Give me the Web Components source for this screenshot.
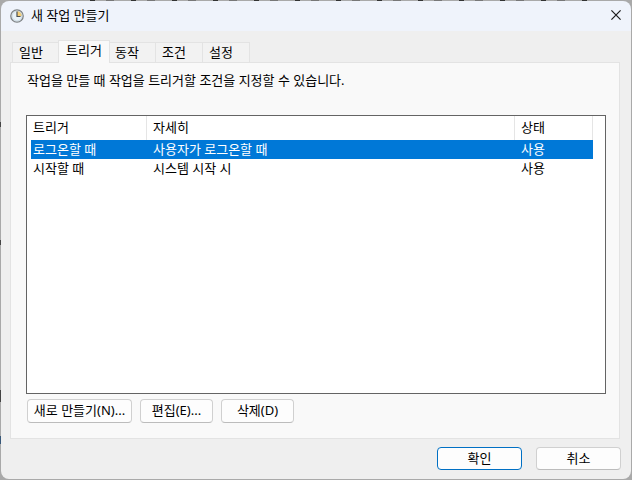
<!DOCTYPE html>
<html lang="ko">
<head>
<meta charset="utf-8">
<title>새 작업 만들기</title>
<style>
  html, body {
    height: 100%;
  }

  body {
    margin: 0;
    font: 13px/18px "Noto Sans", "Noto Sans CJK KR", sans-serif;
    color: #000;
    background: #aaa;
  }
</style>
</head>
<body>
<task-dialog heading="새 작업 만들기">
  <tab-strip slot="tabs">
    <tab-item>일반</tab-item>
    <tab-item selected>트리거</tab-item>
    <tab-item>동작</tab-item>
    <tab-item>조건</tab-item>
    <tab-item>설정</tab-item>
  </tab-strip>
  <tab-panel>
    <span slot="hint">작업을 만들 때 작업을 트리거할 조건을 지정할 수 있습니다.</span>
    <trigger-list></trigger-list>
    <push-button slot="actions" style="--width: 105px">새로 만들기(N)...</push-button>
    <push-button slot="actions">편집(E)...</push-button>
    <push-button slot="actions">삭제(D)</push-button>
  </tab-panel>
  <push-button slot="footer" primary style="--width: 85px; --height: 23px">확인</push-button>
  <push-button slot="footer" style="--width: 85px; --height: 23px">취소</push-button>
</task-dialog>

<template id="task-dialog">
  <header>
    <svg class="clock" width="14" height="14" viewBox="0 0 14 14">
      <circle cx="7" cy="7" r="6.2" fill="#e9f2f8" stroke="#7d8183" stroke-width="1.3"/>
      <path d="M7 7V2a5 5 0 0 1 5 5z" fill="#f5ce75"/>
      <circle cx="7" cy="7" r="4.9" fill="none" stroke="#b9c9d3" stroke-width=".6"/>
      <path d="M7 2.6V7.5H10.6" fill="none" stroke="#4b5054" stroke-width="1.2"/>
    </svg>
    <h1></h1>
    <button aria-label="닫기">
      <svg width="10" height="10" viewBox="0 0 10 10">
        <path d="M.4 .4L9.6 9.6M9.6 .4L.4 9.6" stroke="#1a1a1a" stroke-width="1.2"/>
      </svg>
    </button>
  </header>
  <main>
    <slot name="tabs"></slot>
    <slot></slot>
  </main>
  <footer><slot name="footer"></slot></footer>
  <style>
    :host {
      display: flex;
      box-sizing: border-box;
      height: 100vh;
      padding: 1px;
      background:
        repeating-linear-gradient(90deg, #333 0 5px, transparent 5px 16px, #777 16px 24px, transparent 24px 41px) 90px 0 / 500px 1px no-repeat,
        linear-gradient(#444, #444) 0 122px / 1px 5px no-repeat,
        linear-gradient(#444, #444) 0 240px / 1px 5px no-repeat,
        linear-gradient(#444, #444) 0 390px / 1px 12px no-repeat,
        linear-gradient(#375778, #375778) 0 436px / 1px 8px no-repeat,
        #a9a9a9;
      flex-direction: column;
    }

    header {
      display: flex;
      align-items: center;
      height: 30px;
      padding: 0 10px 0 9px;
      background: #eff3fb;
      border-radius: 8px 8px 0 0;
      box-sizing: border-box;
    }

    h1 {
      flex: 1;
      margin: 0 0 0 7px;
      padding-bottom: 2px;
      font: inherit;
    }

    header button {
      display: grid;
      padding: 0 0 2px;
      border: 0;
      background: transparent;
    }

    main {
      display: flex;
      flex: 1;
      flex-direction: column;
      padding: 9px 11px 0 9px;
      background: #efefef;
    }

    footer {
      display: flex;
      justify-content: flex-end;
      gap: 14px;
      padding: 8px 10px 9px;
      background: #efefef;
      border-radius: 0 0 8px 8px;
    }
  </style>
</template>

<template id="tab-strip">
  <slot></slot>
  <style>
    :host {
      display: flex;
      align-items: flex-end;
      padding-left: 2px;
    }
  </style>
</template>

<template id="tab-item">
  <button role="tab"><slot></slot></button>
  <style>
    :host {
      display: block;
    }

    button {
      display: block;
      box-sizing: border-box;
      width: 47px;
      height: 20px;
      padding: 0 0 1px 6px;
      border: 1px solid #e3e3e3;
      border-width: 1px 1px 0 0;
      background: #f2f2f2;
      color: inherit;
      font: inherit;
      line-height: 18px;
      text-align: left;
    }

    :host(:first-child) button {
      border-left-width: 1px;
    }

    :host([selected]) {
      position: relative;
      margin: 0 -1px -1px;
    }

    :host([selected]) button {
      width: 52px;
      height: 23px;
      padding-left: 7px;
      border-left-width: 1px;
      background: #f9f9f9;
      padding-bottom: 4px;
    }
  </style>
</template>

<template id="tab-panel">
  <p><slot name="hint"></slot></p>
  <slot></slot>
  <div class="actions"><slot name="actions"></slot></div>
  <style>
    :host {
      display: flex;
      flex: 1;
      flex-direction: column;
      padding: 8px 13px 15px 15px;
      border: 1px solid #e3e3e3;
      background: #f9f9f9;
    }

    p {
      margin: 0 0 26px;
      padding-left: 1px;
    }

    .actions {
      display: flex;
      gap: 8px;
      padding: 5px 0 0 1px;
    }
  </style>
</template>

<template id="trigger-list">
  <table>
    <colgroup><col class="trigger"><col><col class="state"></colgroup>
    <thead>
      <tr><th>트리거</th><th>자세히</th><th>상태</th></tr>
    </thead>
    <tbody></tbody>
  </table>
  <style>
    :host {
      display: block;
      flex: 1;
      padding: 0 12px 0 4px;
      border: 1px solid #646464;
      background: #fff;
    }

    table {
      width: 100%;
      table-layout: fixed;
      border-collapse: separate;
      border-spacing: 0;
    }

    .trigger {
      width: 116px;
    }

    .state {
      width: 78px;
    }

    th, td {
      padding: 0 0 0 6px;
      font-weight: normal;
      text-align: left;
      line-height: 19px;
    }

    th {
      height: 24px;
      box-sizing: border-box;
      padding-bottom: 2px;
      border-right: 1px solid #e5e5e5;
      line-height: 22px;
    }

    th:first-child, td:first-child {
      padding-left: 2px;
    }

    tr[aria-selected="true"] {
      background: #0078d7;
      color: #fff;
    }
  </style>
</template>

<template id="push-button">
  <button><slot></slot></button>
  <style>
    :host {
      display: block;
    }

    button {
      display: block;
      box-sizing: border-box;
      width: var(--width, 73px);
      height: var(--height, 24px);
      padding: 0 0 2px;
      border: 1px solid #d0d0d0;
      border-bottom-color: #bcbcbc;
      border-radius: 4px;
      background: #fdfdfd;
      color: inherit;
      font: inherit;
      line-height: 20px;
      white-space: nowrap;
    }

    :host([primary]) button {
      border-color: #0070c4;
    }
  </style>
</template>

<script>
const attach = (element, id) => {
  const shadowRoot = element.attachShadow({ mode: "open" });
  shadowRoot.appendChild(document.getElementById(id).content.cloneNode(true));
  return shadowRoot;
};

class TaskDialog extends HTMLElement {
  connectedCallback() {
    if (!this.shadowRoot) {
      attach(this, "task-dialog");
    }
    this.shadowRoot.querySelector("h1").textContent = this.getAttribute("heading");
  }
}

class TabStrip extends HTMLElement {
  connectedCallback() {
    if (this.shadowRoot) return;
    attach(this, "tab-strip");
    this.setAttribute("role", "tablist");
    this.addEventListener("click", (event) => {
      const tab = event.target.closest("tab-item");
      if (!tab) return;
      [...this.children].forEach(item => item.toggleAttribute("selected", item === tab));
    });
  }
}

class TabItem extends HTMLElement {
  static get observedAttributes() {
    return ["selected"];
  }
  connectedCallback() {
    if (!this.shadowRoot) {
      attach(this, "tab-item");
    }
    this.update();
  }
  attributeChangedCallback() {
    this.update();
  }
  update() {
    if (!this.shadowRoot) return;
    this.shadowRoot.querySelector("button").setAttribute("aria-selected", this.hasAttribute("selected"));
  }
}

class TabPanel extends HTMLElement {
  connectedCallback() {
    if (this.shadowRoot) return;
    attach(this, "tab-panel");
    this.setAttribute("role", "tabpanel");
  }
}

class TriggerList extends HTMLElement {
  #triggers = [
    ["로그온할 때", "사용자가 로그온할 때", "사용"],
    ["시작할 때", "시스템 시작 시", "사용"]
  ];
  connectedCallback() {
    if (this.shadowRoot) return;
    const tbody = attach(this, "trigger-list").querySelector("tbody");
    tbody.innerHTML = this.#triggers
      .map((cells, i) => `<tr aria-selected="${i === 0}">${cells.map(cell => `<td>${cell}</td>`).join("")}</tr>`)
      .join("");
    tbody.addEventListener("click", (event) => {
      const row = event.target.closest("tr");
      [...tbody.rows].forEach(item => item.setAttribute("aria-selected", item === row));
    });
  }
}

class PushButton extends HTMLElement {
  connectedCallback() {
    if (!this.shadowRoot) {
      attach(this, "push-button");
    }
  }
}

customElements.define("task-dialog", TaskDialog);
customElements.define("tab-strip", TabStrip);
customElements.define("tab-item", TabItem);
customElements.define("tab-panel", TabPanel);
customElements.define("trigger-list", TriggerList);
customElements.define("push-button", PushButton);
</script>
</body>
</html>
